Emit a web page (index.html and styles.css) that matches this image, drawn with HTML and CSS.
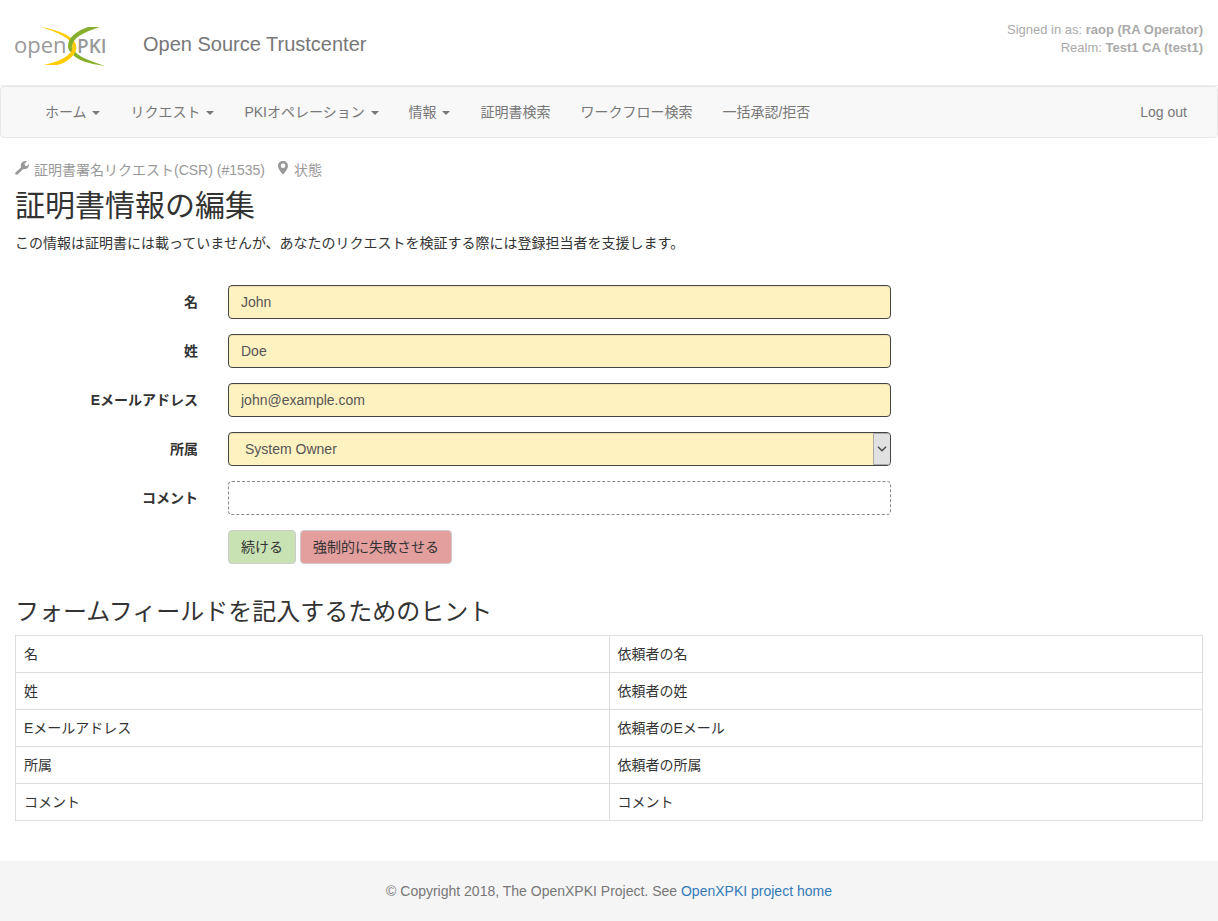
FILE: index.html
```html
<!DOCTYPE html>
<html lang="ja">
<head>
<meta charset="utf-8">
<meta name="viewport" content="width=device-width, initial-scale=1">
<title>Open Source Trustcenter</title>
<link rel="stylesheet" href="styles.css">
</head>
<body>
<header class="header">
  <a class="logo" href="#" aria-label="OpenXPKI">
    <svg width="92" height="42" viewBox="0 0 92 42">
      <text class="logo-open" x="-1" y="28">open</text>
      <text class="logo-pki" x="62" y="28">PKI</text>
      <path fill="#86b02c" d="M54 24C57 31 63 34 69 36.500Q79 40 90 41Q79 37.500 70 33.500C63 30 59 27 57.500 22Z"/>
      <path fill="#fc0" d="M24 1.500C38 4 48 7.500 54 11.500C62 17 63 23 59.500 28.500C56 34 50 38 42 40H29C42 37 51 33 55 28C59 23 58 18 52 13.500C45 8.500 36 5 24 1.500Z"/>
      <path fill="#86b02c" d="M73 2H85C73 6 63 10 59 16C56.500 20 57 23 56 27Q53 25 53 21C53 13 61 6 73 2Z"/>
    </svg>
  </a>
  <div class="tagline">Open Source Trustcenter</div>
  <div class="session">
    <div>Signed in as: <b>raop (RA Operator)</b></div>
    <div>Realm: <b>Test1 CA (test1)</b></div>
  </div>
</header>
<nav class="navbar">
  <ul class="nav">
    <li><a href="#">ホーム <span class="caret"></span></a></li>
    <li><a href="#">リクエスト <span class="caret"></span></a></li>
    <li><a href="#">PKIオペレーション <span class="caret"></span></a></li>
    <li><a href="#">情報 <span class="caret"></span></a></li>
    <li><a href="#">証明書検索</a></li>
    <li><a href="#">ワークフロー検索</a></li>
    <li><a href="#">一括承認/拒否</a></li>
  </ul>
  <ul class="nav">
    <li><a href="#">Log out</a></li>
  </ul>
</nav>
<main class="content">
  <div class="breadcrumb">
    <span class="crumb"><svg width="14" height="16" viewBox="0 0 14 16"><path fill="#999" d="M.5 12.500L6 7.500Q5 4 7.500 2Q9.500 .6 12 1.200L9.500 3.800L10.200 5.800L12 6L13.800 3.800Q14.300 6.500 12.500 8.200Q10.500 9.800 8 9.200L2.800 14.300Q1.500 15.200 .5 14.300Q-.3 13.500 .5 12.500Z"/></svg>証明書署名リクエスト(CSR) (#1535)</span>
    <span class="crumb"><svg width="12" height="16" viewBox="0 0 12 16"><path fill="#999" fill-rule="evenodd" d="M6 1C3 1 1 3 1 6C1 8.500 3.500 12 6 14.500C8.500 12 11 8.500 11 6C11 3 9 1 6 1ZM6 3.500A2.300 2.300 0 1 1 6 8.100A2.300 2.300 0 1 1 6 3.500Z"/></svg>状態</span>
  </div>
  <h1 class="title">証明書情報の編集</h1>
  <p class="lead">この情報は証明書には載っていませんが、あなたのリクエストを検証する際には登録担当者を支援します。</p>
  <form class="form">
    <div class="row">
      <label class="label" for="first">名</label>
      <input class="control required" id="first" type="text" value="John">
    </div>
    <div class="row">
      <label class="label" for="last">姓</label>
      <input class="control required" id="last" type="text" value="Doe">
    </div>
    <div class="row">
      <label class="label" for="email">Eメールアドレス</label>
      <input class="control required" id="email" type="text" value="john@example.com">
    </div>
    <div class="row">
      <label class="label" for="role">所属</label>
      <div class="select-wrap">
        <select class="control required select" id="role"><option>System Owner</option></select>
        <span class="select-arrow"><svg width="10" height="6" viewBox="0 0 10 6"><path fill="none" stroke="#444" stroke-width="1.300" d="M1 .8L5 4.800L9 .8"/></svg></span>
      </div>
    </div>
    <div class="row">
      <label class="label" for="comment">コメント</label>
      <input class="control optional" id="comment" type="text">
    </div>
    <div class="row">
      <div class="buttons">
        <button class="btn btn-go" type="button">続ける</button>
        <button class="btn btn-fail" type="button">強制的に失敗させる</button>
      </div>
    </div>
  </form>
  <h2 class="subtitle">フォームフィールドを記入するためのヒント</h2>
  <table class="hints">
    <tr><td>名</td><td>依頼者の名</td></tr>
    <tr><td>姓</td><td>依頼者の姓</td></tr>
    <tr><td>Eメールアドレス</td><td>依頼者のEメール</td></tr>
    <tr><td>所属</td><td>依頼者の所属</td></tr>
    <tr><td>コメント</td><td>コメント</td></tr>
  </table>
</main>
<footer class="footer">© Copyright 2018, The OpenXPKI Project. See <a href="#">OpenXPKI project home</a></footer>
</body>
</html>
```
FILE: styles.css
```css
* { box-sizing: border-box; }
body {
  margin: 0;
  min-height: 100vh;
  display: flex;
  flex-direction: column;
  font: 14px/20px "Liberation Sans", "Noto Sans CJK JP", sans-serif;
  color: #333;
  background: #fff;
}
.header {
  display: flex;
  align-items: flex-start;
  padding: 21px 15px 15px;
  border-bottom: 1px solid #eee;
}
.logo { display: block; height: 42px; margin-top: 4px; }
.logo svg { display: block; overflow: visible; }
.logo-open { font: 22px "Open Sans", sans-serif; fill: #999; }
.logo-pki { font: 600 19px "Open Sans", sans-serif; fill: #999; }
.tagline { margin: 13px 0 16px 36px; font-size: 20px; color: #777; }
.session {
  margin-left: auto;
  text-align: right;
  font-size: 13px;
  line-height: 18px;
  color: #aaa;
}
.navbar {
  display: flex;
  justify-content: space-between;
  padding: 0 15px;
  background: #f8f8f8;
  border: 1px solid #e7e7e7;
  border-radius: 4px;
}
.nav { display: flex; margin: 0; padding: 0; list-style: none; }
.nav:first-child { margin-left: 14px; }
.nav a { display: block; padding: 15px; color: #777; text-decoration: none; }
.caret {
  display: inline-block;
  margin-left: 2px;
  vertical-align: middle;
  border-top: 4px solid;
  border-left: 4px solid transparent;
  border-right: 4px solid transparent;
}
.content { padding: 22px 15px 40px; }
.breadcrumb { display: flex; gap: 12px; color: #999; }
.crumb { display: flex; gap: 5px; }
.title { margin: 9px 0 11px; font-size: 30px; line-height: 33px; font-weight: 400; }
.lead { margin: 0 0 32px; }
.form { display: grid; gap: 15px; }
.row { display: grid; grid-template-columns: 2fr 7fr 3fr; }
.label { padding: 7px 15px 7px 0; text-align: right; font-weight: 700; }
.control {
  width: calc(100% - 30px);
  height: 34px;
  margin: 0 15px;
  padding: 6px 12px;
  font: inherit;
  color: #555;
  border-radius: 4px;
}
.required {
  background: #fff2c1;
  border: 1px solid #444;
  box-shadow: inset 0 1px 1px rgba(0, 0, 0, .08);
}
.optional { background: #fff; border: 1px dashed #888; }
.select-wrap { position: relative; }
.select { display: block; appearance: none; padding-left: 16px; }
.select-arrow {
  position: absolute;
  top: 1px;
  right: 16px;
  bottom: 1px;
  width: 17px;
  display: grid;
  place-items: center;
  background: #e1e1e1;
  border: 1px solid #aaa;
  border-right: 0;
  border-radius: 0 3px 3px 0;
  pointer-events: none;
}
.buttons { grid-column: 2; display: flex; gap: 4px; padding: 0 15px; }
.btn {
  padding: 6px 12px;
  font: inherit;
  color: #333;
  border: 1px solid #ccc;
  border-radius: 4px;
}
.btn-go { background: #c8e2b3; }
.btn-fail { background: #e39e9e; }
.subtitle { margin: 35px 0 10px; font-size: 24px; line-height: 26px; font-weight: 400; }
.hints { width: 100%; table-layout: fixed; border-collapse: collapse; }
.hints td { padding: 8px; border: 1px solid #ddd; }
.footer {
  margin-top: auto;
  padding: 20px 15px;
  text-align: center;
  color: #777;
  background: #f5f5f5;
}
.footer a { color: #337ab7; text-decoration: none; }
```
